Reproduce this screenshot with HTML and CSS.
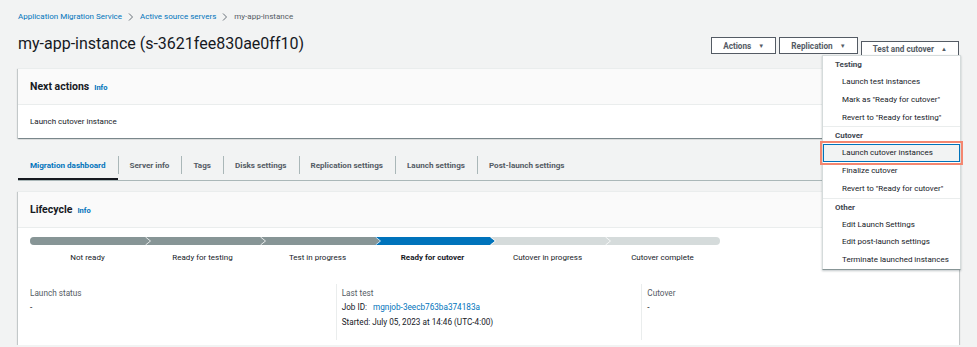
FILE: index.html
```html
<!DOCTYPE html>
<html lang="en">
<head>
    <meta charset="UTF-8">
    <meta name="viewport" content="width=device-width, initial-scale=1.0">
    <title>my-app-instance - Application Migration Service</title>
    <link rel="stylesheet" href="styles.css">
</head>
<body>
    <div class="page">
        <nav class="crumbs">
            <a href="#">Application Migration Service</a>
            <svg class="crumb-sep" width="6" height="8" viewBox="0 0 6 8"><polyline points="1,0.5 4.5,4 1,7.5" fill="none" stroke="#687078" stroke-width="1"/></svg>
            <a href="#">Active source servers</a>
            <svg class="crumb-sep" width="6" height="8" viewBox="0 0 6 8"><polyline points="1,0.5 4.5,4 1,7.5" fill="none" stroke="#687078" stroke-width="1"/></svg>
            <span class="current">my-app-instance</span>
        </nav>

        <div class="head">
            <h1>my-app-instance (s-3621fee830ae0ff10)</h1>
            <div class="actions">
                <button class="btn">Actions <span class="caret">&#9660;</span></button>
                <button class="btn">Replication <span class="caret">&#9660;</span></button>
                <div class="menu-wrap">
                    <button class="btn">Test and cutover <span class="caret">&#9650;</span></button>
                    <div class="menu">
                        <div class="menu-group">
                            <div class="menu-title">Testing</div>
                            <div class="menu-item">Launch test instances</div>
                            <div class="menu-item">Mark as "Ready for cutover"</div>
                            <div class="menu-item">Revert to "Ready for testing"</div>
                        </div>
                        <div class="menu-group">
                            <div class="menu-title">Cutover</div>
                            <div class="menu-item focus">Launch cutover instances</div>
                            <div class="menu-item">Finalize cutover</div>
                            <div class="menu-item">Revert to "Ready for cutover"</div>
                        </div>
                        <div class="menu-group">
                            <div class="menu-title">Other</div>
                            <div class="menu-item">Edit Launch Settings</div>
                            <div class="menu-item">Edit post-launch settings</div>
                            <div class="menu-item">Terminate launched instances</div>
                        </div>
                    </div>
                </div>
            </div>
        </div>

        <section class="panel next-panel">
            <div class="panel-head">
                <h2>Next actions</h2>
                <a class="info" href="#">Info</a>
            </div>
            <div class="next-body">Launch cutover instance</div>
        </section>

        <div class="tabs">
            <a class="tab active" href="#">Migration dashboard</a>
            <a class="tab" href="#">Server info</a>
            <a class="tab" href="#">Tags</a>
            <a class="tab" href="#">Disks settings</a>
            <a class="tab" href="#">Replication settings</a>
            <a class="tab" href="#">Launch settings</a>
            <a class="tab" href="#">Post-launch settings</a>
        </div>

        <section class="panel lifecycle">
            <div class="panel-head">
                <h2>Lifecycle</h2>
                <a class="info" href="#">Info</a>
            </div>
            <div class="lifecycle-body">
                <svg class="steps-bar" width="690" height="8" viewBox="0 0 690 8">
                    <rect width="690" height="8" rx="4" fill="#d5dbdb"/>
                    <rect width="352" height="8" rx="4" fill="#879596"/>
                    <rect x="345" width="115" height="8" fill="#0073bb"/>
                    <polygon points="345,0 350,4 345,8" fill="#879596"/>
                    <polygon points="460,0 465,4 460,8" fill="#0073bb"/>
                    <polyline points="115.5,0 120.5,4 115.5,8" fill="none" stroke="#fff" stroke-width="0.8"/>
                    <polyline points="230.5,0 235.5,4 230.5,8" fill="none" stroke="#fff" stroke-width="0.8"/>
                    <polyline points="345.5,0 350.5,4 345.5,8" fill="none" stroke="#fff" stroke-width="0.8"/>
                    <polyline points="460.5,0 465.5,4 460.5,8" fill="none" stroke="#fff" stroke-width="0.8"/>
                    <polyline points="575.5,0 580.5,4 575.5,8" fill="none" stroke="#fff" stroke-width="0.8"/>
                </svg>
                <div class="steps">
                    <span>Not ready</span>
                    <span>Ready for testing</span>
                    <span>Test in progress</span>
                    <span class="now">Ready for cutover</span>
                    <span>Cutover in progress</span>
                    <span>Cutover complete</span>
                </div>

                <div class="columns">
                    <div class="col">
                        <div class="label">Launch status</div>
                        <div class="value">-</div>
                    </div>
                    <div class="col">
                        <div class="label">Last test</div>
                        <div class="value">Job ID: <a class="job" href="#">mgnjob-3eecb763ba374183a</a></div>
                        <div class="value">Started: July 05, 2023 at 14:46 (UTC-4:00)</div>
                    </div>
                    <div class="col">
                        <div class="label">Cutover</div>
                        <div class="value">-</div>
                    </div>
                </div>
            </div>
        </section>
    </div>
</body>
</html>
```

FILE: styles.css
```css
body {
    margin: 0;
    background: #f2f3f3;
    font-family: Roboto, "Liberation Sans", sans-serif;
    color: #16191f;
}
a {
    text-decoration: none;
}
.page {
    padding: 12px 18px 0;
}

/* breadcrumbs */
.crumbs {
    display: flex;
    align-items: center;
    gap: 6px;
    font-size: 8px;
    line-height: 10px;
}
.crumbs a {
    color: #0073bb;
}
.crumbs .current {
    color: #545b64;
}

/* page header */
.head {
    display: flex;
    justify-content: space-between;
    align-items: flex-start;
    margin-top: 14px;
    height: 20px;
}
h1 {
    margin: -1px 0 0;
    font-size: 16px;
    font-weight: 400;
    line-height: 18px;
}
.actions {
    display: flex;
    gap: 3px;
    margin-top: 1px;
}
.btn {
    height: 17px;
    padding: 0 11px;
    border: 1px solid #545b64;
    background: #fff;
    color: #545b64;
    font-family: inherit;
    font-size: 8.2px;
    font-weight: 700;
    cursor: pointer;
}
.caret {
    font-size: 6px;
    margin-left: 5px;
    vertical-align: 1px;
}
.menu-wrap {
    position: relative;
}
.menu {
    position: absolute;
    top: 18px;
    right: -2px;
    width: 137px;
    background: #fff;
    border: 1px solid #d5dbdb;
    border-bottom-color: #879596;
    box-shadow: 0 1px 2px rgba(0, 28, 36, 0.25);
    font-size: 8px;
    z-index: 5;
}
.menu-group + .menu-group {
    border-top: 1px solid #eaeded;
}
.menu-title {
    height: 17px;
    line-height: 17px;
    padding-left: 12px;
    font-weight: 700;
    color: #414750;
}
.menu-item {
    height: 17.75px;
    line-height: 17.75px;
    padding-left: 19px;
    white-space: nowrap;
}
.menu-item.focus {
    background: #f2f3f3;
    border: 1px solid #0073bb;
    line-height: 15.75px;
    height: 15.75px;
    padding-left: 18px;
    outline: 2px solid #f4866f;
    outline-offset: 1px;
}

/* containers */
.panel {
    background: #fff;
    border-top: 1px solid #eaeded;
    box-shadow: 0 1px 1px 0 rgba(0, 28, 36, 0.3), 1px 1px 1px 0 rgba(0, 28, 36, 0.15), -1px 1px 1px 0 rgba(0, 28, 36, 0.15);
}
.panel-head {
    display: flex;
    align-items: center;
    gap: 5px;
    height: 35px;
    padding: 0 12px;
    background: #fafafa;
    border-bottom: 1px solid #eaeded;
}
.panel-head h2 {
    margin: 0;
    font-size: 10.5px;
    font-weight: 700;
}
.info {
    color: #0073bb;
    font-size: 7.5px;
    font-weight: 700;
    padding-top: 1px;
}
.next-panel {
    margin-top: 12px;
}
.next-body {
    height: 33px;
    display: flex;
    align-items: center;
    padding: 0 12px;
    font-size: 8px;
}

/* tabs */
.tabs {
    display: flex;
    align-items: center;
    height: 30px;
    margin-top: 12px;
    border-bottom: 1px solid #aab7b8;
}
.tab {
    position: relative;
    height: 30px;
    line-height: 30px;
    padding: 0 12px;
    font-size: 8.1px;
    font-weight: 700;
    color: #545b64;
}
.tab + .tab::before {
    content: "";
    position: absolute;
    left: 0;
    top: 6px;
    height: 18px;
    border-left: 1px solid #aab7b8;
}
.tab.active {
    color: #0073bb;
    box-shadow: inset 0 -2px 0 #16191f;
}

/* lifecycle */
.lifecycle {
    margin-top: 10px;
}
.lifecycle-body {
    padding: 9px 12px 5px;
}
.steps-bar {
    display: block;
}
.steps {
    display: grid;
    grid-template-columns: repeat(6, 115px);
    margin-top: 8px;
    font-size: 8px;
    line-height: 10px;
    text-align: center;
}
.steps .now {
    font-weight: 700;
}
.columns {
    display: grid;
    grid-template-columns: repeat(3, 1fr);
    margin-top: 21px;
    font-size: 8.2px;
}
.col {
    min-height: 52px;
    padding-top: 4px;
}
.col + .col {
    border-left: 1px solid #eaeded;
    padding-left: 5px;
}
.label {
    line-height: 10px;
    color: #545b64;
    margin-bottom: 2px;
}
.value {
    line-height: 15px;
}
.job {
    color: #0073bb;
    margin-left: 4px;
}
```
